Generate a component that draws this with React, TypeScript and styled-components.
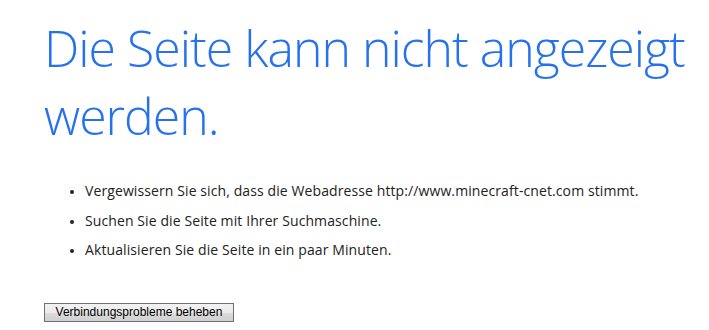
import React from "react";
import styled, { createGlobalStyle } from "styled-components";

const GlobalStyle = createGlobalStyle`
  html, body {
    margin: 0;
    padding: 0;
    background: #ffffff;
  }
`;

const PageStyled = styled.div`
  padding: 14px 0 0 44px;
  font-family: "Open Sans", "Noto Sans", sans-serif;
`;

const TitleStyled = styled.h1`
  margin: 0;
  font-weight: 300;
  font-size: 50px;
  line-height: 68px;
  color: #2672ec;
  letter-spacing: -1px;
`;

const TaskListStyled = styled.ul`
  margin: 26px 0 0 0;
  padding: 0 0 0 41px;
  list-style: disc;
`;

const TaskItemStyled = styled.li`
  font-size: 14px;
  line-height: 29.5px;
  color: #222222;
  letter-spacing: 0.1px;

  &::marker {
    font-size: 11px;
  }
`;

const ButtonStyled = styled.button`
  margin-top: 38px;
  width: 190px;
  height: 19px;
  padding: 0;
  font-family: "Liberation Sans", Arial, sans-serif;
  font-size: 12px;
  color: #000000;
  border: 1px solid #707070;
  border-radius: 0;
  background: linear-gradient(#f2f2f2, #ebebeb 50%, #dddddd 51%, #cfcfcf);
`;

function App() {
  return (
    <>
      <GlobalStyle />
      <PageStyled>
        <TitleStyled>Die Seite kann nicht angezeigt werden.</TitleStyled>
        <TaskListStyled>
          <TaskItemStyled>
            Vergewissern Sie sich, dass die Webadresse http://www.minecraft-cnet.com stimmt.
          </TaskItemStyled>
          <TaskItemStyled>Suchen Sie die Seite mit Ihrer Suchmaschine.</TaskItemStyled>
          <TaskItemStyled>Aktualisieren Sie die Seite in ein paar Minuten.</TaskItemStyled>
        </TaskListStyled>
        <ButtonStyled>Verbindungsprobleme beheben</ButtonStyled>
      </PageStyled>
    </>
  );
}

export default App;
